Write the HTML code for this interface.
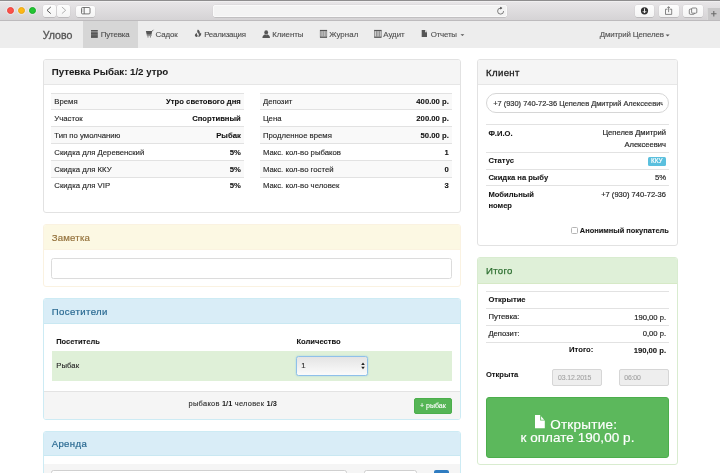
<!DOCTYPE html>
<html><head><meta charset="utf-8"><style>
html,body{margin:0;padding:0;width:720px;height:473px;overflow:hidden;background:#fff;font-family:"Liberation Sans", sans-serif;}
b{font-weight:700;}
</style></head><body><div style="position:absolute;left:0;top:0;width:720px;height:473px;overflow:hidden;will-change:transform;">
<div style="position:absolute;left:0px;top:0px;width:720px;height:21px;background:linear-gradient(#e9e7e9,#d4d2d4);"></div>
<div style="position:absolute;left:0px;top:0px;width:720px;height:1px;background:#8e8d8e;"></div>
<div style="position:absolute;left:0px;top:1px;width:720px;height:1px;background:#f0eff0;"></div>
<div style="position:absolute;left:0px;top:20px;width:720px;height:1px;background:#bdbbbd;"></div>
<div style="position:absolute;left:6.75px;top:7.0px;width:7.0px;height:7.0px;background:#fc5048;border-radius:50%;box-sizing:border-box;border:0.4px solid #e8443e;box-shadow:0 0 0 0.8px rgba(255,255,255,0.45);"></div>
<div style="position:absolute;left:17.75px;top:7.0px;width:7.0px;height:7.0px;background:#fdb714;border-radius:50%;box-sizing:border-box;border:0.4px solid #e6a51a;box-shadow:0 0 0 0.8px rgba(255,255,255,0.45);"></div>
<div style="position:absolute;left:28.5px;top:7.0px;width:7.0px;height:7.0px;background:#22c532;border-radius:50%;box-sizing:border-box;border:0.4px solid #1aab29;box-shadow:0 0 0 0.8px rgba(255,255,255,0.45);"></div>
<div style="position:absolute;left:42.5px;top:5px;width:13.299999999999997px;height:11.5px;background:linear-gradient(#fdfdfd,#f4f4f4);border-radius:2px;box-shadow:0 0.5px 0.6px rgba(0,0,0,0.2), 0 0 0 0.4px rgba(0,0,0,0.06);"></div>
<div style="position:absolute;left:57px;top:5px;width:12.700000000000003px;height:11.5px;background:linear-gradient(#fdfdfd,#f4f4f4);border-radius:2px;box-shadow:0 0.5px 0.6px rgba(0,0,0,0.2), 0 0 0 0.4px rgba(0,0,0,0.06);"></div>
<div style="position:absolute;left:75.5px;top:5.5px;width:19.5px;height:11.0px;background:linear-gradient(#fdfdfd,#f4f4f4);border-radius:2px;box-shadow:0 0.5px 0.6px rgba(0,0,0,0.2), 0 0 0 0.4px rgba(0,0,0,0.06);"></div>
<div style="position:absolute;left:213px;top:4.9px;width:294.2px;height:11.700000000000001px;background:#f3f3f3;border-radius:2.5px;box-shadow:inset 0 0 0 0.8px #fcfcfc, 0 0.5px 0.6px rgba(0,0,0,0.16), 0 0 0 0.4px rgba(0,0,0,0.05);"></div>
<div style="position:absolute;left:634.75px;top:5px;width:19.25px;height:11.5px;background:linear-gradient(#fdfdfd,#f4f4f4);border-radius:2px;box-shadow:0 0.5px 0.6px rgba(0,0,0,0.2), 0 0 0 0.4px rgba(0,0,0,0.06);"></div>
<div style="position:absolute;left:659px;top:5px;width:19.5px;height:11.5px;background:linear-gradient(#fdfdfd,#f4f4f4);border-radius:2px;box-shadow:0 0.5px 0.6px rgba(0,0,0,0.2), 0 0 0 0.4px rgba(0,0,0,0.06);"></div>
<div style="position:absolute;left:683px;top:5px;width:19.899999999999977px;height:11.5px;background:linear-gradient(#fdfdfd,#f4f4f4);border-radius:2px;box-shadow:0 0.5px 0.6px rgba(0,0,0,0.2), 0 0 0 0.4px rgba(0,0,0,0.06);"></div>
<div style="position:absolute;left:706.9px;top:7.6px;width:13.100000000000023px;height:12.4px;background:#c9c8c9;box-shadow:inset 0.6px 0 0 #e6e6e6;"></div>
<svg style="position:absolute;left:0;top:0" width="720" height="21" viewBox="0 0 720 21">
<path d="M50.8 7 L47 10.3 L50.8 13.6" fill="none" stroke="#4a4a4a" stroke-width="0.9"/>
<path d="M61.9 7 L65.7 10.3 L61.9 13.6" fill="none" stroke="#aaa" stroke-width="0.9"/>
<rect x="81.5" y="7.5" width="8.5" height="6.4" rx="1" fill="none" stroke="#555" stroke-width="0.8"/>
<line x1="84.2" y1="7.5" x2="84.2" y2="13.9" stroke="#555" stroke-width="0.8"/>
<path d="M82.3 9 H83.5 M82.3 10.2 H83.5 M82.3 11.4 H83.5" stroke="#999" stroke-width="0.5"/>
<path d="M503.6 11.1 A3 3 0 1 1 500.6 8.1" fill="none" stroke="#555" stroke-width="0.75"/>
<path d="M500.3 6.8 L502.4 8.1 L500.3 9.4 Z" fill="#333"/>
<circle cx="644.5" cy="10.8" r="3.6" fill="#333"/>
<path d="M644.5 8.4 V12.7 M642.8 11.1 L644.5 12.8 L646.2 11.1" fill="none" stroke="#fff" stroke-width="0.9"/>
<path d="M667.5 9.2 H665.5 V14.4 H671.7 V9.2 H669.7 M668.6 12.2 V6.7 M667.3 8 L668.6 6.7 L669.9 8" fill="none" stroke="#555" stroke-width="0.7"/>
<rect x="689.3" y="9.1" width="5.2" height="5.2" rx="1" fill="#f8f8f8" stroke="#555" stroke-width="0.7"/>
<rect x="691.6" y="8" width="5.2" height="5.2" rx="1" fill="#f8f8f8" stroke="#555" stroke-width="0.7"/>
<path d="M713.8 11 V16.4 M711.1 13.7 H716.5" stroke="#6a6a6a" stroke-width="1.1"/>
</svg>
<div style="position:absolute;left:0px;top:21px;width:720px;height:26.5px;background:#ededed;"></div>
<div style="position:absolute;left:83.3px;top:21px;width:54.500000000000014px;height:26.5px;background:#d6d6d6;"></div>
<div style="position:absolute;left:42.7px;top:29.63px;font-size:10.6px;line-height:10.6px;font-weight:400;color:#555;white-space:nowrap;-webkit-text-stroke:0.3px #555;">Улово</div>
<div style="position:absolute;left:100.8px;top:31.31px;font-size:7.9px;line-height:7.9px;font-weight:400;color:#505050;white-space:nowrap;-webkit-text-stroke:0.12px #505050;letter-spacing:-0.150px;">Путевка</div>
<div style="position:absolute;left:155.5px;top:31.31px;font-size:7.9px;line-height:7.9px;font-weight:400;color:#505050;white-space:nowrap;-webkit-text-stroke:0.12px #505050;letter-spacing:-0.124px;">Садок</div>
<div style="position:absolute;left:204.2px;top:31.31px;font-size:7.9px;line-height:7.9px;font-weight:400;color:#505050;white-space:nowrap;-webkit-text-stroke:0.12px #505050;letter-spacing:-0.232px;">Реализация</div>
<div style="position:absolute;left:272.2px;top:31.31px;font-size:7.9px;line-height:7.9px;font-weight:400;color:#505050;white-space:nowrap;-webkit-text-stroke:0.12px #505050;letter-spacing:-0.077px;">Клиенты</div>
<div style="position:absolute;left:329.2px;top:31.31px;font-size:7.9px;line-height:7.9px;font-weight:400;color:#505050;white-space:nowrap;-webkit-text-stroke:0.12px #505050;letter-spacing:0.050px;">Журнал</div>
<div style="position:absolute;left:383.3px;top:31.31px;font-size:7.9px;line-height:7.9px;font-weight:400;color:#505050;white-space:nowrap;-webkit-text-stroke:0.12px #505050;letter-spacing:-0.016px;">Аудит</div>
<div style="position:absolute;left:430.7px;top:31.31px;font-size:7.9px;line-height:7.9px;font-weight:400;color:#505050;white-space:nowrap;-webkit-text-stroke:0.12px #505050;letter-spacing:-0.197px;">Отчеты</div>
<div style="position:absolute;left:599.75px;top:31.31px;font-size:7.9px;line-height:7.9px;font-weight:400;color:#505050;white-space:nowrap;-webkit-text-stroke:0.12px #505050;letter-spacing:-0.133px;">Дмитрий Цепелев</div>
<svg style="position:absolute;left:0;top:21px" width="720" height="27" viewBox="0 21 720 27">
<g fill="#555">
<rect x="91" y="30" width="6.8" height="1.6"/><rect x="91" y="32.2" width="6.8" height="5.7"/>
<rect x="91" y="34.7" width="6.8" height="0.45" fill="#9a9a9a"/>
<path d="M145.9 31 H152.2 L151.5 34.8 H146.7 Z"/>
<path d="M151.9 31.4 L153.4 29.8" stroke="#555" stroke-width="0.8"/>
<rect x="146.8" y="35.3" width="4.8" height="0.6"/>
<circle cx="148" cy="36.8" r="0.65"/><circle cx="150.4" cy="36.8" r="0.65"/>
<path d="M197.9 29.6 C196.6 31 197.2 32.4 198.2 33.3 C198.9 34 199 34.8 198.7 35.5 L198.2 37.1 C200.8 36.5 201.8 34.4 201 32.5 C200.7 33.3 200.3 33.6 199.8 33.6 C200.1 32 199.5 30.7 197.9 29.6 Z"/>
<path d="M196.9 32.8 C194.8 33.8 194.3 35.6 195.5 36.6 C196.7 37.4 198 36.5 197.7 35.4 C197 34.9 196.7 34 196.9 32.8 Z"/>
<ellipse cx="266.2" cy="32.4" rx="1.9" ry="2.2"/><path d="M262.4 37.9 C262.6 35.6 263.8 34.9 265.2 34.6 L266.2 35.3 L267.2 34.6 C268.6 34.9 269.8 35.6 270 37.9 Z"/>
<rect x="320.2" y="30.2" width="6.6" height="7.2" fill="#cfcfcf" stroke="#666" stroke-width="0.6"/>
<rect x="320" y="30" width="7" height="1.1"/><rect x="320" y="36.6" width="7" height="1.1"/>
<rect x="321.6" y="31.2" width="0.7" height="5.4" fill="#777"/><rect x="323.2" y="31.2" width="0.7" height="5.4" fill="#888"/><rect x="324.8" y="31.2" width="0.7" height="5.4" fill="#777"/>
<rect x="374.6" y="30.2" width="6.6" height="7.2" fill="#cfcfcf" stroke="#666" stroke-width="0.6"/>
<rect x="374.4" y="30" width="7" height="1.1"/><rect x="374.4" y="36.6" width="7" height="1.1"/>
<rect x="376" y="31.2" width="0.7" height="5.4" fill="#777"/><rect x="377.6" y="31.2" width="0.7" height="5.4" fill="#888"/><rect x="379.2" y="31.2" width="0.7" height="5.4" fill="#777"/>
<path d="M421.7 29.9 H425 V32.2 H427 V37 H421.7 Z"/>
<path d="M425.5 30 L427 31.6 H425.5 Z" fill="#888"/>
<path d="M460.5 34.2 H464.3 L462.4 36.1 Z"/>
<path d="M665.6 34.5 H669.6 L667.6 36.5 Z"/>
</g></svg>
<div style="position:absolute;left:43px;top:59px;width:418px;height:154px;box-sizing:border-box;border:1px solid #e2e2e2;border-radius:3px;background:#fff;"></div>
<div style="position:absolute;left:44px;top:60px;width:416px;height:24px;background:#f5f5f5;border-radius:2px 2px 0 0;"></div>
<div style="position:absolute;left:44px;top:84px;width:416px;height:1px;background:#e6e6e6;"></div>
<div style="position:absolute;left:51.7px;top:67.09px;font-size:9.7px;line-height:9.7px;font-weight:700;color:#1c1c1c;white-space:nowrap;-webkit-text-stroke:0.05px #1c1c1c;">Путевка Рыбак: 1/2 утро</div>
<div style="position:absolute;left:51px;top:92.8px;width:193px;height:16.5px;background:#f9f9f9;"></div>
<div style="position:absolute;left:51px;top:92.8px;width:193px;height:1.0px;background:#e2e2e2;"></div>
<div style="position:absolute;left:51px;top:109.3px;width:193px;height:1.0px;background:#e2e2e2;"></div>
<div style="position:absolute;left:51px;top:126.4px;width:193px;height:16.900000000000006px;background:#f9f9f9;"></div>
<div style="position:absolute;left:51px;top:126.4px;width:193px;height:1.0px;background:#e2e2e2;"></div>
<div style="position:absolute;left:51px;top:143.3px;width:193px;height:1.0px;background:#e2e2e2;"></div>
<div style="position:absolute;left:51px;top:160.4px;width:193px;height:16.599999999999994px;background:#f9f9f9;"></div>
<div style="position:absolute;left:51px;top:160.4px;width:193px;height:1.0px;background:#e2e2e2;"></div>
<div style="position:absolute;left:51px;top:177.0px;width:193px;height:1.0px;background:#e2e2e2;"></div>
<div style="position:absolute;left:54.3px;top:98.24px;font-size:7.75px;line-height:7.75px;font-weight:400;color:#262626;white-space:nowrap;-webkit-text-stroke:0.12px #262626;">Время</div>
<div style="position:absolute;right:479.2px;top:98.28px;font-size:7.7px;line-height:7.7px;font-weight:700;color:#111;white-space:nowrap;-webkit-text-stroke:0.08px #111;">Утро светового дня</div>
<div style="position:absolute;left:54.3px;top:114.74px;font-size:7.75px;line-height:7.75px;font-weight:400;color:#262626;white-space:nowrap;-webkit-text-stroke:0.12px #262626;">Участок</div>
<div style="position:absolute;right:479.2px;top:114.78px;font-size:7.7px;line-height:7.7px;font-weight:700;color:#111;white-space:nowrap;-webkit-text-stroke:0.08px #111;">Спортивный</div>
<div style="position:absolute;left:54.3px;top:131.84px;font-size:7.75px;line-height:7.75px;font-weight:400;color:#262626;white-space:nowrap;-webkit-text-stroke:0.12px #262626;">Тип по умолчанию</div>
<div style="position:absolute;right:479.2px;top:131.88px;font-size:7.7px;line-height:7.7px;font-weight:700;color:#111;white-space:nowrap;-webkit-text-stroke:0.08px #111;">Рыбак</div>
<div style="position:absolute;left:54.3px;top:148.74px;font-size:7.75px;line-height:7.75px;font-weight:400;color:#262626;white-space:nowrap;-webkit-text-stroke:0.12px #262626;">Скидка для Деревенский</div>
<div style="position:absolute;right:479.2px;top:148.78px;font-size:7.7px;line-height:7.7px;font-weight:700;color:#111;white-space:nowrap;-webkit-text-stroke:0.08px #111;">5%</div>
<div style="position:absolute;left:54.3px;top:165.84px;font-size:7.75px;line-height:7.75px;font-weight:400;color:#262626;white-space:nowrap;-webkit-text-stroke:0.12px #262626;">Скидка для ККУ</div>
<div style="position:absolute;right:479.2px;top:165.88px;font-size:7.7px;line-height:7.7px;font-weight:700;color:#111;white-space:nowrap;-webkit-text-stroke:0.08px #111;">5%</div>
<div style="position:absolute;left:54.3px;top:182.44px;font-size:7.75px;line-height:7.75px;font-weight:400;color:#262626;white-space:nowrap;-webkit-text-stroke:0.12px #262626;">Скидка для VIP</div>
<div style="position:absolute;right:479.2px;top:182.48px;font-size:7.7px;line-height:7.7px;font-weight:700;color:#111;white-space:nowrap;-webkit-text-stroke:0.08px #111;">5%</div>
<div style="position:absolute;left:259.6px;top:92.8px;width:192.39999999999998px;height:16.5px;background:#f9f9f9;"></div>
<div style="position:absolute;left:259.6px;top:92.8px;width:192.39999999999998px;height:1.0px;background:#e2e2e2;"></div>
<div style="position:absolute;left:259.6px;top:109.3px;width:192.39999999999998px;height:1.0px;background:#e2e2e2;"></div>
<div style="position:absolute;left:259.6px;top:126.4px;width:192.39999999999998px;height:16.900000000000006px;background:#f9f9f9;"></div>
<div style="position:absolute;left:259.6px;top:126.4px;width:192.39999999999998px;height:1.0px;background:#e2e2e2;"></div>
<div style="position:absolute;left:259.6px;top:143.3px;width:192.39999999999998px;height:1.0px;background:#e2e2e2;"></div>
<div style="position:absolute;left:259.6px;top:160.4px;width:192.39999999999998px;height:16.599999999999994px;background:#f9f9f9;"></div>
<div style="position:absolute;left:259.6px;top:160.4px;width:192.39999999999998px;height:1.0px;background:#e2e2e2;"></div>
<div style="position:absolute;left:259.6px;top:177.0px;width:192.39999999999998px;height:1.0px;background:#e2e2e2;"></div>
<div style="position:absolute;left:262.90000000000003px;top:98.24px;font-size:7.75px;line-height:7.75px;font-weight:400;color:#262626;white-space:nowrap;-webkit-text-stroke:0.12px #262626;">Депозит</div>
<div style="position:absolute;right:271.2px;top:98.28px;font-size:7.7px;line-height:7.7px;font-weight:700;color:#111;white-space:nowrap;-webkit-text-stroke:0.08px #111;">400.00 р.</div>
<div style="position:absolute;left:262.90000000000003px;top:114.74px;font-size:7.75px;line-height:7.75px;font-weight:400;color:#262626;white-space:nowrap;-webkit-text-stroke:0.12px #262626;">Цена</div>
<div style="position:absolute;right:271.2px;top:114.78px;font-size:7.7px;line-height:7.7px;font-weight:700;color:#111;white-space:nowrap;-webkit-text-stroke:0.08px #111;">200.00 р.</div>
<div style="position:absolute;left:262.90000000000003px;top:131.84px;font-size:7.75px;line-height:7.75px;font-weight:400;color:#262626;white-space:nowrap;-webkit-text-stroke:0.12px #262626;">Продленное время</div>
<div style="position:absolute;right:271.2px;top:131.88px;font-size:7.7px;line-height:7.7px;font-weight:700;color:#111;white-space:nowrap;-webkit-text-stroke:0.08px #111;">50.00 р.</div>
<div style="position:absolute;left:262.90000000000003px;top:148.74px;font-size:7.75px;line-height:7.75px;font-weight:400;color:#262626;white-space:nowrap;-webkit-text-stroke:0.12px #262626;">Макс. кол-во рыбаков</div>
<div style="position:absolute;right:271.2px;top:148.78px;font-size:7.7px;line-height:7.7px;font-weight:700;color:#111;white-space:nowrap;-webkit-text-stroke:0.08px #111;">1</div>
<div style="position:absolute;left:262.90000000000003px;top:165.84px;font-size:7.75px;line-height:7.75px;font-weight:400;color:#262626;white-space:nowrap;-webkit-text-stroke:0.12px #262626;">Макс. кол-во гостей</div>
<div style="position:absolute;right:271.2px;top:165.88px;font-size:7.7px;line-height:7.7px;font-weight:700;color:#111;white-space:nowrap;-webkit-text-stroke:0.08px #111;">0</div>
<div style="position:absolute;left:262.90000000000003px;top:182.44px;font-size:7.75px;line-height:7.75px;font-weight:400;color:#262626;white-space:nowrap;-webkit-text-stroke:0.12px #262626;">Макс. кол-во человек</div>
<div style="position:absolute;right:271.2px;top:182.48px;font-size:7.7px;line-height:7.7px;font-weight:700;color:#111;white-space:nowrap;-webkit-text-stroke:0.08px #111;">3</div>
<div style="position:absolute;left:43px;top:224px;width:418px;height:63px;box-sizing:border-box;border:1px solid #faf2e1;border-radius:3px;background:#fff;"></div>
<div style="position:absolute;left:44px;top:225px;width:416px;height:24px;background:#fcf8e3;border-radius:2px 2px 0 0;"></div>
<div style="position:absolute;left:44px;top:249px;width:416px;height:1px;background:#fbf3e0;"></div>
<div style="position:absolute;left:51.7px;top:232.67px;font-size:9.6px;line-height:9.6px;font-weight:400;color:#94723c;white-space:nowrap;-webkit-text-stroke:0.18px #94723c;letter-spacing:0.22px;">Заметка</div>
<div style="position:absolute;left:51.4px;top:257.5px;width:400.6px;height:21.30000000000001px;box-sizing:border-box;border:1.2px solid #dcdcdc;border-radius:2.5px;background:#fff;"></div>
<div style="position:absolute;left:43px;top:298px;width:418px;height:122px;box-sizing:border-box;border:1px solid #cdebf4;border-radius:3px;background:#fff;"></div>
<div style="position:absolute;left:44px;top:299px;width:416px;height:23.5px;background:#d9edf7;border-radius:2px 2px 0 0;"></div>
<div style="position:absolute;left:44px;top:322.5px;width:416px;height:1.0px;background:#c9e8f2;"></div>
<div style="position:absolute;left:51.8px;top:307.07px;font-size:9.6px;line-height:9.6px;font-weight:400;color:#2a6a92;white-space:nowrap;-webkit-text-stroke:0.2px #2a6a92;letter-spacing:0.4px;">Посетители</div>
<div style="position:absolute;left:56.2px;top:337.95px;font-size:7.5px;line-height:7.5px;font-weight:700;color:#151515;white-space:nowrap;-webkit-text-stroke:0.08px #151515;">Посетитель</div>
<div style="position:absolute;left:296.4px;top:337.77px;font-size:7.6px;line-height:7.6px;font-weight:700;color:#151515;white-space:nowrap;-webkit-text-stroke:0.08px #151515;">Количество</div>
<div style="position:absolute;left:51.5px;top:350.9px;width:400.5px;height:29.700000000000045px;background:#dff0d8;"></div>
<div style="position:absolute;left:56.2px;top:362.28px;font-size:7.7px;line-height:7.7px;font-weight:400;color:#262626;white-space:nowrap;-webkit-text-stroke:0.12px #262626;letter-spacing:0.1px;">Рыбак</div>
<div style="position:absolute;left:296.4px;top:355.9px;width:71.20000000000005px;height:20.5px;box-sizing:border-box;border:1px solid #8fc0ea;border-radius:2.5px;background:linear-gradient(#e4e4e4,#fbfbfb);box-shadow:0 0 1.5px rgba(102,175,233,0.7);"></div>
<div style="position:absolute;left:301.2px;top:362.20px;font-size:7.8px;line-height:7.8px;font-weight:400;color:#333;white-space:nowrap;-webkit-text-stroke:0.15px #333;">1</div>
<svg style="position:absolute;left:360px;top:361px" width="6" height="10" viewBox="0 0 6 10"><path d="M1.2 4 L3 1.6 L4.8 4 Z M1.2 5.8 L3 8.2 L4.8 5.8 Z" fill="#222"/></svg>
<div style="position:absolute;left:44px;top:391px;width:416px;height:28px;background:#f5f5f5;border-top:1px solid #e3e3e3;box-sizing:border-box;border-radius:0 0 2px 2px;"></div>
<div style="position:absolute;left:188.6px;top:399.9px;font-size:7.4px;line-height:7.4px;color:#333;white-space:nowrap;-webkit-text-stroke:0.15px #333;letter-spacing:0.3px;">рыбаков</div>
<div style="position:absolute;left:222px;top:399.9px;font-size:7.4px;line-height:7.4px;color:#222;font-weight:700;white-space:nowrap;">1/1</div>
<div style="position:absolute;left:234.8px;top:399.9px;font-size:7.4px;line-height:7.4px;color:#333;white-space:nowrap;-webkit-text-stroke:0.15px #333;letter-spacing:0.3px;">человек</div>
<div style="position:absolute;left:266.6px;top:399.9px;font-size:7.4px;line-height:7.4px;color:#222;font-weight:700;white-space:nowrap;">1/3</div>
<div style="position:absolute;left:414.2px;top:397.5px;width:37.5px;height:16.30000000000001px;background:#55b555;border:0.6px solid #4cae4c;border-radius:2px;box-sizing:border-box;"></div>
<div style="position:absolute;left:132.89999999999998px;width:600px;text-align:center;top:402.27px;font-size:7px;line-height:7px;font-weight:400;color:#fff;white-space:nowrap;-webkit-text-stroke:0.12px #fff;">+ рыбак</div>
<div style="position:absolute;left:43px;top:430.5px;width:418px;height:59.5px;box-sizing:border-box;border:1px solid #cdebf4;border-radius:3px;background:#fff;"></div>
<div style="position:absolute;left:44px;top:431.5px;width:416px;height:23.5px;background:#d9edf7;border-radius:2px 2px 0 0;"></div>
<div style="position:absolute;left:44px;top:455px;width:416px;height:1px;background:#c9e8f2;"></div>
<div style="position:absolute;left:51.7px;top:439.47px;font-size:9.6px;line-height:9.6px;font-weight:400;color:#2a6a92;white-space:nowrap;-webkit-text-stroke:0.2px #2a6a92;letter-spacing:0.35px;">Аренда</div>
<div style="position:absolute;left:44px;top:463.7px;width:416px;height:26.30000000000001px;background:#f5f5f5;"></div>
<div style="position:absolute;left:51.2px;top:469.5px;width:295.8px;height:20.5px;box-sizing:border-box;border:1px solid #cfcfcf;border-radius:2.5px;background:linear-gradient(#fff,#eaeaea);"></div>
<div style="position:absolute;left:364px;top:469.5px;width:52.60000000000002px;height:20.5px;box-sizing:border-box;border:1px solid #cfcfcf;border-radius:2.5px;background:#fff;"></div>
<div style="position:absolute;left:433.5px;top:470px;width:15.5px;height:20px;border-radius:2px;background:#2f7cc1;"></div>
<div style="position:absolute;left:477px;top:59px;width:201px;height:187px;box-sizing:border-box;border:1px solid #e2e2e2;border-radius:3px;background:#fff;"></div>
<div style="position:absolute;left:478px;top:60px;width:199px;height:23.5px;background:#f5f5f5;border-radius:2px 2px 0 0;"></div>
<div style="position:absolute;left:478px;top:83.5px;width:199px;height:1.0px;background:#e6e6e6;"></div>
<div style="position:absolute;left:486.1px;top:67.97px;font-size:9.6px;line-height:9.6px;font-weight:400;color:#1a1a1a;white-space:nowrap;-webkit-text-stroke:0.3px #1a1a1a;letter-spacing:0.33px;">Клиент</div>
<div style="position:absolute;left:485.5px;top:93px;width:183.70000000000005px;height:20.299999999999997px;box-sizing:border-box;border:1.2px solid #d6d6d6;border-radius:10px;background:#fff;"></div>
<div style="position:absolute;left:493.2px;top:92.7px;width:170px;height:20px;overflow:hidden;">
<div style="position:absolute;left:0px;top:6.89px;font-size:7.45px;line-height:7.45px;font-weight:400;color:#333;white-space:nowrap;-webkit-text-stroke:0.2px #333;">+7 (930) 740-72-36 Цепелев Дмитрий Алексеевич</div>
</div>
<div style="position:absolute;left:485.6px;top:123.6px;width:183.39999999999998px;height:1.0px;background:#e2e2e2;"></div>
<div style="position:absolute;left:485.6px;top:151.5px;width:183.39999999999998px;height:1.0px;background:#e2e2e2;"></div>
<div style="position:absolute;left:485.6px;top:168.6px;width:183.39999999999998px;height:1.0px;background:#e2e2e2;"></div>
<div style="position:absolute;left:485.6px;top:185.2px;width:183.39999999999998px;height:1.0px;background:#e2e2e2;"></div>
<div style="position:absolute;left:488.4px;top:129.97px;font-size:7.6px;line-height:7.6px;font-weight:700;color:#151515;white-space:nowrap;-webkit-text-stroke:0.08px #151515;">Ф.И.О.</div>
<div style="position:absolute;right:54px;top:129.07px;font-size:7.6px;line-height:7.6px;font-weight:400;color:#262626;white-space:nowrap;-webkit-text-stroke:0.18px #262626;">Цепелев Дмитрий</div>
<div style="position:absolute;right:54px;top:140.57px;font-size:7.6px;line-height:7.6px;font-weight:400;color:#262626;white-space:nowrap;-webkit-text-stroke:0.18px #262626;">Алексеевич</div>
<div style="position:absolute;left:488.4px;top:157.27px;font-size:7.6px;line-height:7.6px;font-weight:700;color:#151515;white-space:nowrap;-webkit-text-stroke:0.08px #151515;">Статус</div>
<div style="position:absolute;left:647.8px;top:156.7px;width:18.100000000000023px;height:9.5px;background:#5bc0de;border-radius:1.5px;"></div>
<div style="position:absolute;left:356.79999999999995px;width:600px;text-align:center;top:158.48px;font-size:6.4px;line-height:6.4px;font-weight:400;color:#fff;white-space:nowrap;-webkit-text-stroke:0.15px #fff;">ККУ</div>
<div style="position:absolute;left:488.4px;top:173.87px;font-size:7.6px;line-height:7.6px;font-weight:700;color:#151515;white-space:nowrap;-webkit-text-stroke:0.08px #151515;">Скидка на рыбу</div>
<div style="position:absolute;right:54px;top:173.98px;font-size:7.7px;line-height:7.7px;font-weight:400;color:#262626;white-space:nowrap;-webkit-text-stroke:0.18px #262626;">5%</div>
<div style="position:absolute;left:488.4px;top:190.97px;font-size:7.6px;line-height:7.6px;font-weight:700;color:#151515;white-space:nowrap;-webkit-text-stroke:0.08px #151515;">Мобильный</div>
<div style="position:absolute;left:488.4px;top:201.87px;font-size:7.6px;line-height:7.6px;font-weight:700;color:#151515;white-space:nowrap;-webkit-text-stroke:0.08px #151515;">номер</div>
<div style="position:absolute;right:54px;top:190.81px;font-size:7.55px;line-height:7.55px;font-weight:400;color:#262626;white-space:nowrap;-webkit-text-stroke:0.18px #262626;">+7 (930) 740-72-36</div>
<div style="position:absolute;left:571px;top:227px;width:6.5px;height:6.699999999999989px;box-sizing:border-box;border:0.8px solid #b5b5b5;border-radius:1.5px;background:#fff;"></div>
<div style="position:absolute;right:51.10000000000002px;top:226.79px;font-size:7.45px;line-height:7.45px;font-weight:700;color:#151515;white-space:nowrap;-webkit-text-stroke:0.08px #151515;">Анонимный покупатель</div>
<div style="position:absolute;left:477px;top:257px;width:201px;height:208px;box-sizing:border-box;border:1px solid #d9ecd0;border-radius:3px;background:#fff;"></div>
<div style="position:absolute;left:478px;top:258px;width:199px;height:24.5px;background:#dff0d8;border-radius:2px 2px 0 0;"></div>
<div style="position:absolute;left:478px;top:282.5px;width:199px;height:1.0px;background:#d6e9c6;"></div>
<div style="position:absolute;left:486px;top:266.47px;font-size:9.6px;line-height:9.6px;font-weight:400;color:#2f7032;white-space:nowrap;-webkit-text-stroke:0.25px #2f7032;letter-spacing:0.3px;">Итого</div>
<div style="position:absolute;left:485.6px;top:291.1px;width:183.39999999999998px;height:1.0px;background:#e2e2e2;"></div>
<div style="position:absolute;left:485.6px;top:308.3px;width:183.39999999999998px;height:1.0px;background:#e2e2e2;"></div>
<div style="position:absolute;left:485.6px;top:325.1px;width:183.39999999999998px;height:1.0px;background:#e2e2e2;"></div>
<div style="position:absolute;left:485.6px;top:341.7px;width:183.39999999999998px;height:1.0px;background:#e2e2e2;"></div>
<div style="position:absolute;left:488.4px;top:296.37px;font-size:7.6px;line-height:7.6px;font-weight:700;color:#151515;white-space:nowrap;-webkit-text-stroke:0.08px #151515;">Открытие</div>
<div style="position:absolute;left:488.4px;top:313.42px;font-size:7.65px;line-height:7.65px;font-weight:400;color:#262626;white-space:nowrap;-webkit-text-stroke:0.18px #262626;">Путевка:</div>
<div style="position:absolute;right:53.89999999999998px;top:313.62px;font-size:7.65px;line-height:7.65px;font-weight:400;color:#262626;white-space:nowrap;-webkit-text-stroke:0.18px #262626;">190,00 р.</div>
<div style="position:absolute;left:488.4px;top:329.62px;font-size:7.65px;line-height:7.65px;font-weight:400;color:#262626;white-space:nowrap;-webkit-text-stroke:0.18px #262626;">Депозит:</div>
<div style="position:absolute;right:53.89999999999998px;top:329.82px;font-size:7.65px;line-height:7.65px;font-weight:400;color:#262626;white-space:nowrap;-webkit-text-stroke:0.18px #262626;">0,00 р.</div>
<div style="position:absolute;right:126.70000000000005px;top:346.28px;font-size:7.7px;line-height:7.7px;font-weight:700;color:#151515;white-space:nowrap;-webkit-text-stroke:0.08px #151515;">Итого:</div>
<div style="position:absolute;right:53.89999999999998px;top:346.58px;font-size:7.7px;line-height:7.7px;font-weight:700;color:#151515;white-space:nowrap;-webkit-text-stroke:0.08px #151515;">190,00 р.</div>
<div style="position:absolute;left:486px;top:371.01px;font-size:7.55px;line-height:7.55px;font-weight:700;color:#151515;white-space:nowrap;-webkit-text-stroke:0.08px #151515;">Открыта</div>
<div style="position:absolute;left:552.2px;top:369.4px;width:50.19999999999993px;height:16.600000000000023px;box-sizing:border-box;border:1.1px solid #d6d6d6;border-radius:2px;background:#eeeeee;"></div>
<div style="position:absolute;left:558px;top:374.66px;font-size:6.9px;line-height:6.9px;font-weight:400;color:#a5a5a5;white-space:nowrap;-webkit-text-stroke:0.12px #a5a5a5;letter-spacing:-0.12px;">03.12.2015</div>
<div style="position:absolute;left:619px;top:369.4px;width:49.799999999999955px;height:16.600000000000023px;box-sizing:border-box;border:1.1px solid #d6d6d6;border-radius:2px;background:#eeeeee;"></div>
<div style="position:absolute;left:624.3px;top:374.66px;font-size:6.9px;line-height:6.9px;font-weight:400;color:#a5a5a5;white-space:nowrap;-webkit-text-stroke:0.12px #a5a5a5;letter-spacing:-0.2px;">06:00</div>
<div style="position:absolute;left:486px;top:396.6px;width:183px;height:61.39999999999998px;background:#5cb85c;border:0.7px solid #4cae4c;border-radius:3px;box-sizing:border-box;"></div>
<svg style="position:absolute;left:535px;top:415.2px" width="10" height="14" viewBox="0 0 10 14"><path d="M0 0 H5.2 V5.5 H9.8 V13.3 H0 Z M6.1 1.3 L9.2 4.7 H6.1 Z" fill="#fff"/></svg>
<div style="position:absolute;left:550.2px;top:417.97px;font-size:13.5px;line-height:13.5px;font-weight:400;color:#fff;white-space:nowrap;-webkit-text-stroke:0.18px #fff;letter-spacing:0.25px;">Открытие:</div>
<div style="position:absolute;left:520.4px;top:431.47px;font-size:13.5px;line-height:13.5px;font-weight:400;color:#fff;white-space:nowrap;-webkit-text-stroke:0.18px #fff;letter-spacing:0.05px;">к оплате 190,00 р.</div>
</div></body></html>
